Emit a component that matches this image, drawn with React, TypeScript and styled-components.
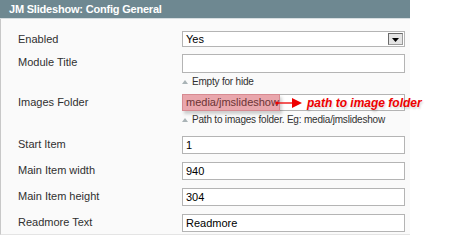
import React from 'react';
import styled, { createGlobalStyle } from 'styled-components';

const GlobalStyle = createGlobalStyle`
  body {
    margin: 0;
    background: #ffffff;
    font-family: "Liberation Sans", Arial, sans-serif;
  }
`;

const Panel = styled.div`
  width: 410px;
  height: 235px;
  background: #fafafa;
  border-left: 1px solid #c8c8c8;
  border-bottom: 1px solid #e4e4e4;
  box-sizing: border-box;
  overflow: visible;
`;

const Header = styled.div`
  height: 18px;
  background: #6e8891;
  color: #ffffff;
  font-size: 11px;
  font-weight: bold;
  line-height: 18px;
  letter-spacing: -0.2px;
  padding-left: 9px;
  margin-left: -1px;
  border-bottom: 1px solid #d6dde0;
`;

const Form = styled.div`
  display: flex;
  flex-direction: column;
  padding: 12px 0 0 17px;
`;

const Row = styled.div<{ $gap: number }>`
  display: grid;
  grid-template-columns: 164px 223px;
  margin-bottom: ${(p) => p.$gap}px;
`;

const Label = styled.div`
  font-size: 11px;
  color: #303030;
  line-height: 14px;
  padding-top: 1px;
`;

const Field = styled.div`
  position: relative;
  display: flex;
  flex-direction: column;
`;

const Input = styled.div<{ $h?: number }>`
  height: ${(p) => p.$h ?? 18}px;
  box-sizing: border-box;
  border: 1px solid #b4b4b4;
  background: #ffffff;
  font-size: 11px;
  color: #000;
  line-height: 16px;
  padding-left: 3px;
`;

const Select = styled(Input)`
  display: flex;
  align-items: center;
  justify-content: space-between;
  padding-right: 1px;
`;

const DropBtn = styled.div`
  width: 15px;
  height: 12px;
  box-sizing: border-box;
  border: 1px solid #6a6a6a;
  border-right-color: #9a9a9a;
  border-bottom-color: #9a9a9a;
  background: #e4e4e4;
  display: flex;
  align-items: flex-end;
  justify-content: center;
  padding-bottom: 2px;
`;

const Hint = styled.div`
  font-size: 10px;
  color: #303030;
  line-height: 12px;
  letter-spacing: -0.2px;
  margin-top: 3px;
  display: flex;
  align-items: center;
  gap: 4px;
`;

const HintArrow = styled.span`
  width: 0;
  height: 0;
  border-left: 3px solid transparent;
  border-right: 3px solid transparent;
  border-bottom: 4px solid #a9b3b6;
`;

const Highlight = styled.div`
  position: absolute;
  left: 0;
  top: 0;
  width: 98px;
  height: 17px;
  background: #e9a6ac;
  border: 1px solid #d68a91;
  box-sizing: border-box;
  box-shadow: 2px 3px 3px rgba(0, 0, 0, 0.18);
  font-size: 11px;
  line-height: 15px;
  color: #6b3434;
  padding-left: 3px;
`;

const Callout = styled.div`
  position: absolute;
  left: 93px;
  top: 2px;
  display: flex;
  align-items: center;
  gap: 4px;
  white-space: nowrap;
`;

const CalloutText = styled.span`
  color: #ee0000;
  font-size: 12px;
  font-weight: bold;
  font-style: italic;
  text-shadow: 1px 2px 2px rgba(0, 0, 0, 0.15);
`;

const fields = [
  { label: 'Start Item', value: '1' },
  { label: 'Main Item width', value: '940' },
  { label: 'Main Item height', value: '304' },
  { label: 'Readmore Text', value: 'Readmore' },
];

export default function App() {
  return (
    <>
      <GlobalStyle />
      <Panel>
        <Header>JM Slideshow: Config General</Header>
        <Form>
          <Row $gap={7}>
            <Label>Enabled</Label>
            <Select $h={16}>
              Yes
              <DropBtn>
                <svg width="7" height="4" viewBox="0 0 7 4">
                  <path d="M0 0h7L3.5 4z" fill="#000" />
                </svg>
              </DropBtn>
            </Select>
          </Row>
          <Row $gap={6}>
            <Label>Module Title</Label>
            <Field>
              <Input $h={19} />
              <Hint>
                <HintArrow />
                Empty for hide
              </Hint>
            </Field>
          </Row>
          <Row $gap={10}>
            <Label>Images Folder</Label>
            <Field>
              <Input $h={17}>media/jmslideshow</Input>
              <Highlight>media/jmslideshow</Highlight>
              <Callout>
                <svg width="28" height="10" viewBox="0 0 28 10">
                  <circle cx="2" cy="5" r="1.6" fill="#ee0000" />
                  <path d="M2 5h16" stroke="#ee0000" strokeWidth="1.3" />
                  <path d="M17 0l10 5-10 5z" fill="#ee0000" />
                </svg>
                <CalloutText>path to image folder</CalloutText>
              </Callout>
              <Hint>
                <HintArrow />
                Path to images folder. Eg: media/jmslideshow
              </Hint>
            </Field>
          </Row>
          {fields.map((f) => (
            <Row key={f.label} $gap={8}>
              <Label>{f.label}</Label>
              <Input>{f.value}</Input>
            </Row>
          ))}
        </Form>
      </Panel>
    </>
  );
}
